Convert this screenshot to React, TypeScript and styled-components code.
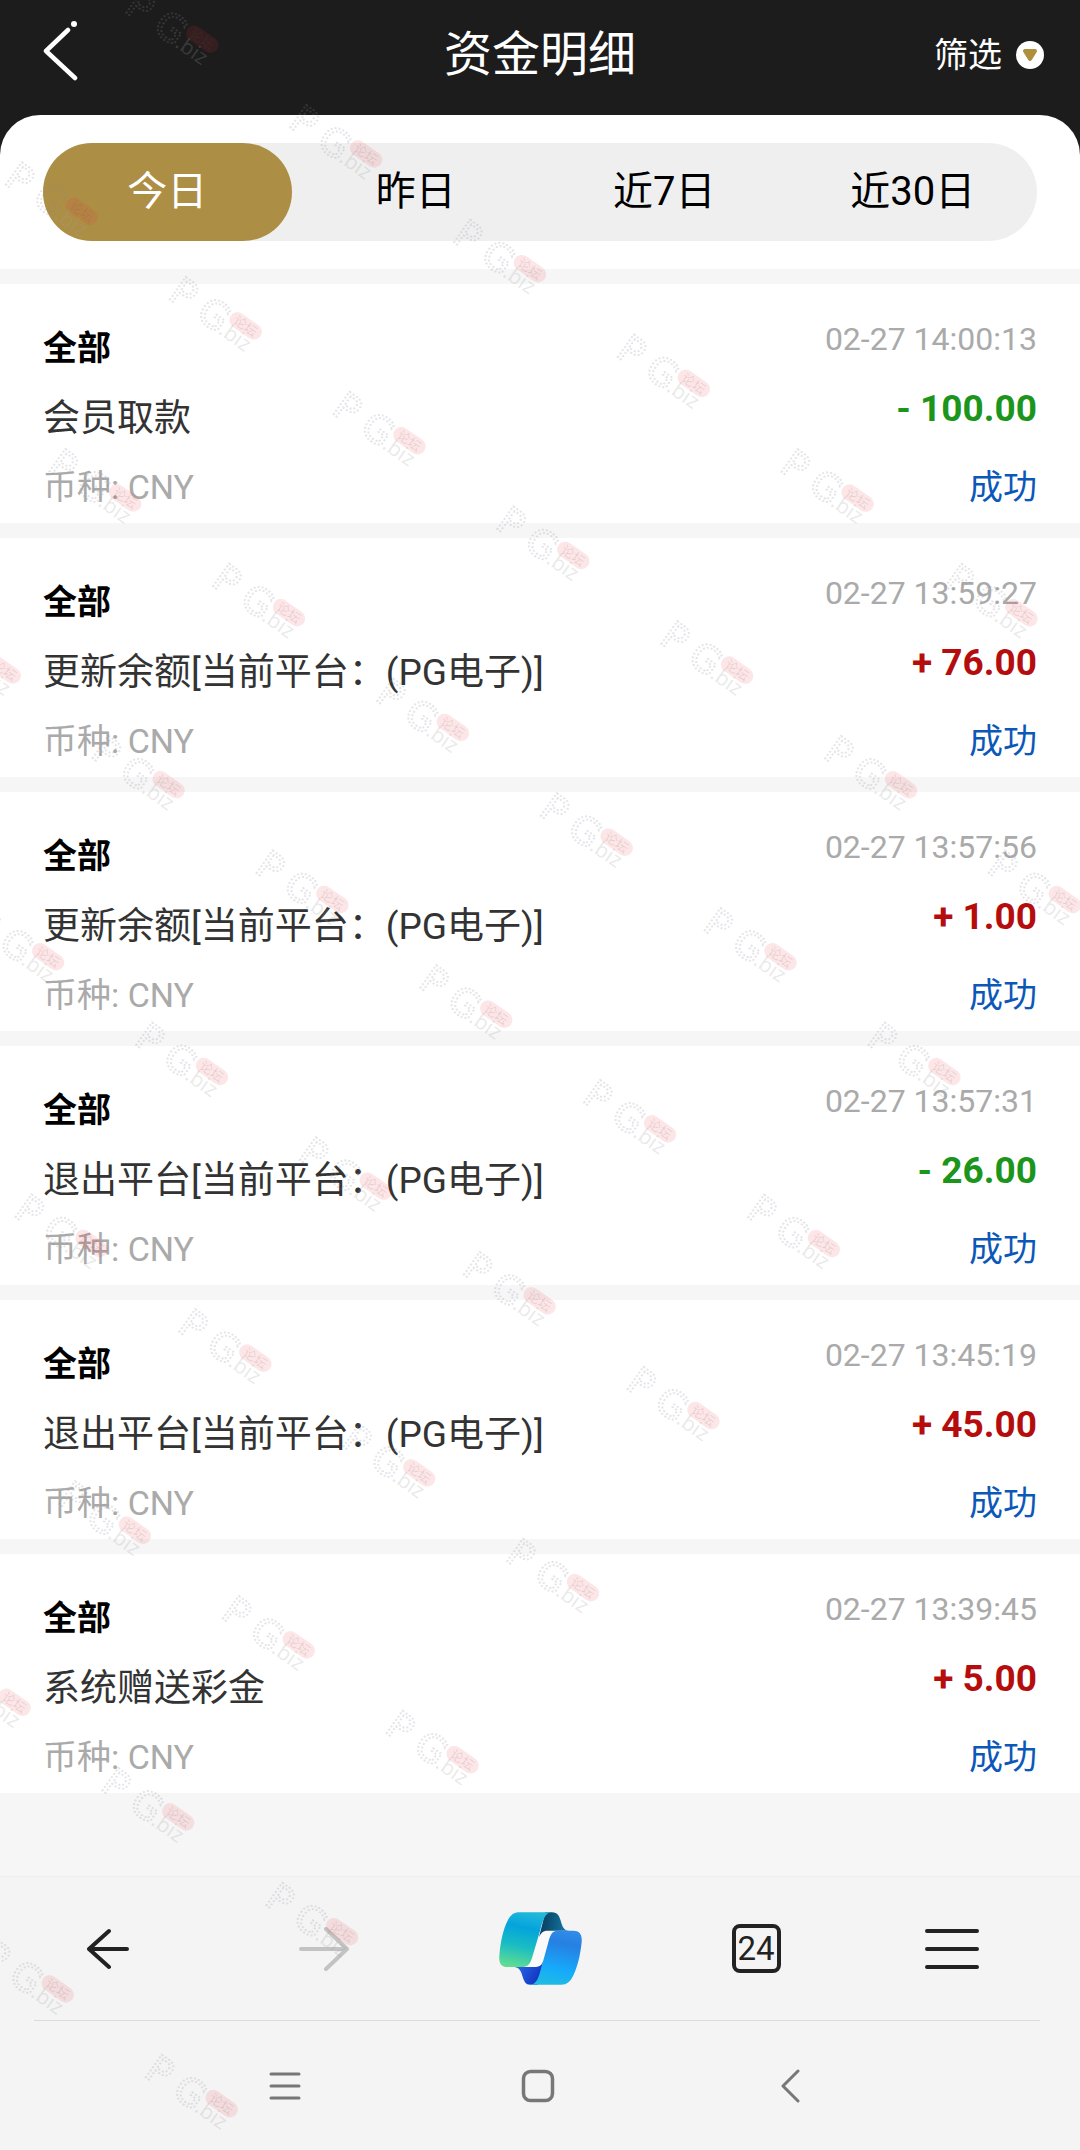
import React, { useState } from "react";
import styled, { createGlobalStyle } from "styled-components";

const GlobalStyle = createGlobalStyle`
  *, *::before, *::after { box-sizing: border-box; }
  body {
    margin: 0;
    background: #f6f6f6;
    font-family: Roboto, "Noto Sans CJK SC", sans-serif;
    color: #000;
  }
  button {
    margin: 0;
    padding: 0;
    border: 0;
    background: none;
    font: inherit;
    color: inherit;
    cursor: pointer;
  }
  svg { display: block; }
`;

const Page = styled.div`
  position: relative;
  min-height: 100vh;
  display: flex;
  flex-direction: column;
  overflow: hidden;
`;

const Header = styled.header`
  display: grid;
  grid-template-columns: 1fr auto 1fr;
  align-items: center;
  height: 155px;
  margin-bottom: -40px;
  padding: 0 36px 46px;
  background: #1c1c1c;
  color: #fff;
`;

const Title = styled.h1`
  margin: 0;
  font-size: 48px;
  font-weight: 400;
  line-height: 72px;
`;

const BackButton = styled.button`
  justify-self: start;
  padding: 0 7px 8px;
`;

const FilterButton = styled.button`
  justify-self: end;
  display: flex;
  align-items: center;
  gap: 14px;
  font-size: 34px;
  line-height: 48px;
`;

const TabPanel = styled.nav`
  padding: 28px 43px;
  background: #fff;
  border-radius: 40px 40px 0 0;
`;

const Tabs = styled.div`
  display: grid;
  grid-template-columns: repeat(4, 1fr);
  height: 98px;
  border-radius: 49px;
  background: #efefef;
`;

const Tab = styled.button<{ $active: boolean }>`
  border-radius: 49px;
  font-size: 40px;
  line-height: 98px;
  background: ${(p) => (p.$active ? "#ad8e45" : "transparent")};
  color: ${(p) => (p.$active ? "#fff" : "#000")};
`;

const List = styled.ul`
  display: flex;
  flex-direction: column;
  gap: 15px;
  margin: 0;
  padding: 15px 0 80px;
  list-style: none;
`;

const Card = styled.li`
  display: flex;
  justify-content: space-between;
  height: 239px;
  padding: 0 43px;
  background: #fff;
`;

const Details = styled.div`
  display: flex;
  flex-direction: column;
  padding-top: 29px;
`;

const Result = styled.div`
  display: flex;
  flex-direction: column;
  align-items: flex-end;
  padding-top: 20px;
  line-height: 70px;
`;

const Category = styled.strong`
  font-size: 34px;
  font-weight: 700;
  line-height: 70px;
`;

const Description = styled.span`
  font-size: 37px;
  line-height: 72px;
  color: #333;
`;

const Currency = styled.span`
  font-size: 34px;
  line-height: 64px;
  color: #aaa;
`;

const Time = styled.time`
  font-size: 32px;
  color: #aaa;
`;

const Amount = styled.span<{ $income: boolean }>`
  font-size: 37px;
  font-weight: 700;
  color: ${(p) => (p.$income ? "#b50d0d" : "#1b951b")};
`;

const Status = styled.span`
  padding-top: 8px;
  font-size: 34px;
  color: #0c58b8;
`;

const Footer = styled.footer`
  margin-top: auto;
  background: #f4f4f4;
  border-top: 1px solid #eee;
`;

const BrowserBar = styled.nav`
  display: grid;
  grid-template-columns: repeat(5, 1fr);
  height: 143px;
`;

const BarButton = styled.button<{ $shift?: boolean }>`
  display: flex;
  align-items: center;
  justify-content: center;
  padding-right: ${(p) => (p.$shift ? "40px" : "0")};
`;

const TabCount = styled.span`
  display: flex;
  align-items: center;
  justify-content: center;
  width: 49px;
  height: 49px;
  border: 4px solid #222;
  border-radius: 8px;
  font-size: 33px;
  line-height: 40px;
  color: #222;
`;

const SystemBar = styled.nav`
  display: grid;
  grid-template-columns: repeat(3, 1fr);
  height: 129px;
  padding: 0 162px 0 158px;
`;

const Divider = styled.hr`
  height: 1px;
  margin: 0 40px 0 34px;
  border: 0;
  background: #d9dcdb;
`;

const Overlay = styled.svg`
  position: absolute;
  inset: 0;
  width: 100%;
  height: 100%;
  pointer-events: none;
`;

const LogoText = styled.text`
  font-family: "DejaVu Sans", sans-serif;
  font-size: 38px;
  fill: none;
  stroke: rgba(140, 140, 155, 0.24);
  stroke-width: 2px;
  stroke-dasharray: 2 2;
`;

const DomainText = styled.text`
  font-family: "Open Sans", sans-serif;
  font-size: 21px;
  fill: rgba(160, 160, 160, 0.24);
`;

const BadgeText = styled.text`
  font-family: "Noto Sans CJK SC", sans-serif;
  font-size: 13px;
  fill: rgba(110, 80, 80, 0.16);
`;

const tabs = ["今日", "昨日", "近7日", "近30日"];

const records = [
  { text: "会员取款", time: "02-27 14:00:13", amount: "- 100.00" },
  { text: "更新余额[当前平台：(PG电子)]", time: "02-27 13:59:27", amount: "+ 76.00" },
  { text: "更新余额[当前平台：(PG电子)]", time: "02-27 13:57:56", amount: "+ 1.00" },
  { text: "退出平台[当前平台：(PG电子)]", time: "02-27 13:57:31", amount: "- 26.00" },
  { text: "退出平台[当前平台：(PG电子)]", time: "02-27 13:45:19", amount: "+ 45.00" },
  { text: "系统赠送彩金", time: "02-27 13:39:45", amount: "+ 5.00" },
];

// First and last mark in each diagonal row that touches the page.
const markRows = [[0, 5], [0, 6], [1, 6], [1, 6], [2, 6], [3, 6], [4, 6], [4, 6], [5, 6]];

function Watermark() {
  return (
    <Overlay aria-hidden="true">
      <g transform="translate(141 -11) rotate(35)">
        {markRows.flatMap(([first, last], row) =>
          Array.from({ length: last - first + 1 }, (_, n) => (
            <g key={`${row}-${n}`} transform={`translate(${(first + n) * 200} ${row * 210})`}>
              <LogoText x="-2" y="28">
                P<tspan x="32">G</tspan>
              </LogoText>
              <rect x="61" y="-2" width="36" height="16" rx="8" fill="rgba(235,50,60,.12)" />
              <BadgeText x="66" y="11">论坛</BadgeText>
              <DomainText x="60" y="28">.biz</DomainText>
            </g>
          ))
        )}
      </g>
    </Overlay>
  );
}

function CopilotLogo() {
  return (
    <svg width="83" height="73" viewBox="116 97 249 219" aria-hidden="true">
      <defs>
        <linearGradient id="leaf" x1="0.55" y1="0" x2="0.35" y2="1">
          <stop offset="0" stopColor="#20b8da" />
          <stop offset="0.28" stopColor="#04a3dc" />
          <stop offset="0.62" stopColor="#18bcc4" />
          <stop offset="1" stopColor="#5fdc92" />
        </linearGradient>
        <linearGradient id="sky" x1="0.6" y1="0" x2="0.4" y2="1">
          <stop offset="0" stopColor="#2f8ae8" />
          <stop offset="0.22" stopColor="#2680e2" />
          <stop offset="0.7" stopColor="#16aafb" />
          <stop offset="1" stopColor="#1fbbe2" />
        </linearGradient>
        <linearGradient id="foldTop" x1="0.2" y1="0.5" x2="1" y2="0.6">
          <stop offset="0" stopColor="#0b4768" />
          <stop offset="1" stopColor="#1580ae" />
        </linearGradient>
        <linearGradient id="foldBottom" x1="0" y1="0" x2="1" y2="0.5">
          <stop offset="0" stopColor="#2e72ee" />
          <stop offset="1" stopColor="#1233c0" />
        </linearGradient>
      </defs>
      <path fill="#fafafa" d="M236 172Q243 153 262 153H295L262 195 247 245Q242 262 222 262H192L215 235Z" />
      <path fill="url(#foldTop)" d="M255 98H275C292 98 298 110 303 130 308 146 314 153 327 153H262C250 153 243 157 236 172Z" />
      <path fill="url(#foldBottom)" d="M163 262C178 264 182 275 186 288 191 305 196 315 210 315H232L250 240C245 258 236 262 222 262Z" />
      <path fill="url(#leaf)" d="M177 98H275C256 98 248 118 240 150L215 235C209 255 200 262 185 262H142C122 262 115 250 117 228 121 180 130 148 141 125 150 106 160 98 177 98Z" />
      <path fill="url(#sky)" d="M293 153H338C358 153 366 165 364 187 360 225 352 260 340 285 331 305 320 315 302 315H208C226 315 233 300 240 275L262 195C270 165 274 153 293 153Z" />
    </svg>
  );
}

export default function App() {
  const [active, setActive] = useState(0);

  return (
    <Page>
      <GlobalStyle />
      <Header>
        <BackButton aria-label="返回">
          <svg width="36" height="62" viewBox="0 0 36 62" fill="none" stroke="#fff" strokeWidth="4.5" strokeLinecap="round" strokeLinejoin="round">
            <path d="M25 10 3 31 32 58" />
            <circle cx="31" cy="4" r="3" fill="#fff" stroke="none" />
          </svg>
        </BackButton>
        <Title>资金明细</Title>
        <FilterButton>
          筛选
          <svg width="28" height="28" viewBox="0 0 28 28" aria-hidden="true">
            <circle cx="14" cy="14" r="14" fill="#fff" />
            <path d="M9 10H19L14 18Z" fill="#b08f3c" stroke="#b08f3c" strokeWidth="4" strokeLinejoin="round" />
          </svg>
        </FilterButton>
      </Header>

      <TabPanel>
        <Tabs>
          {tabs.map((label, i) => (
            <Tab key={label} $active={i === active} aria-pressed={i === active} onClick={() => setActive(i)}>
              {label}
            </Tab>
          ))}
        </Tabs>
      </TabPanel>

      <List>
        {records.map((r) => (
          <Card key={r.time}>
            <Details>
              <Category>全部</Category>
              <Description>{r.text}</Description>
              <Currency>币种: CNY</Currency>
            </Details>
            <Result>
              <Time>{r.time}</Time>
              <Amount $income={r.amount.startsWith("+")}>{r.amount}</Amount>
              <Status>成功</Status>
            </Result>
          </Card>
        ))}
      </List>

      <Footer>
        <BrowserBar>
          <BarButton aria-label="后退">
            <svg width="42" height="42" viewBox="0 0 42 42" fill="none" stroke="#222" strokeWidth="4" strokeLinecap="round" strokeLinejoin="round">
              <path d="M22 3 2 21 22 39M2 21H40" />
            </svg>
          </BarButton>
          <BarButton aria-label="前进">
            <svg width="50" height="44" viewBox="0 0 50 44" fill="none" stroke="#c3c3c3" strokeWidth="4" strokeLinecap="round" strokeLinejoin="round">
              <path d="M27 2 48 22 27 42M48 22H2" />
            </svg>
          </BarButton>
          <BarButton aria-label="Copilot">
            <CopilotLogo />
          </BarButton>
          <BarButton>
            <TabCount>24</TabCount>
          </BarButton>
          <BarButton aria-label="菜单" $shift>
            <svg width="56" height="42" viewBox="0 0 56 42" stroke="#222" strokeWidth="4" strokeLinecap="round">
              <path d="M3 3H53M3 21H53M3 39H53" />
            </svg>
          </BarButton>
        </BrowserBar>
        <Divider />
        <SystemBar>
          <BarButton aria-label="最近任务">
            <svg width="32" height="28" viewBox="0 0 32 28" stroke="#777" strokeWidth="3" strokeLinecap="round">
              <path d="M2 2H30M2 14H30M2 26H30" />
            </svg>
          </BarButton>
          <BarButton aria-label="主屏幕">
            <svg width="34" height="34" viewBox="0 0 34 34" fill="none" stroke="#777" strokeWidth="3.5">
              <rect x="2.5" y="2.5" width="29" height="29" rx="7" />
            </svg>
          </BarButton>
          <BarButton aria-label="系统返回">
            <svg width="20" height="34" viewBox="0 0 20 34" fill="none" stroke="#777" strokeWidth="3" strokeLinecap="round" strokeLinejoin="round">
              <path d="M17 2 2 17 17 32" />
            </svg>
          </BarButton>
        </SystemBar>
      </Footer>
      <Watermark />
    </Page>
  );
}
